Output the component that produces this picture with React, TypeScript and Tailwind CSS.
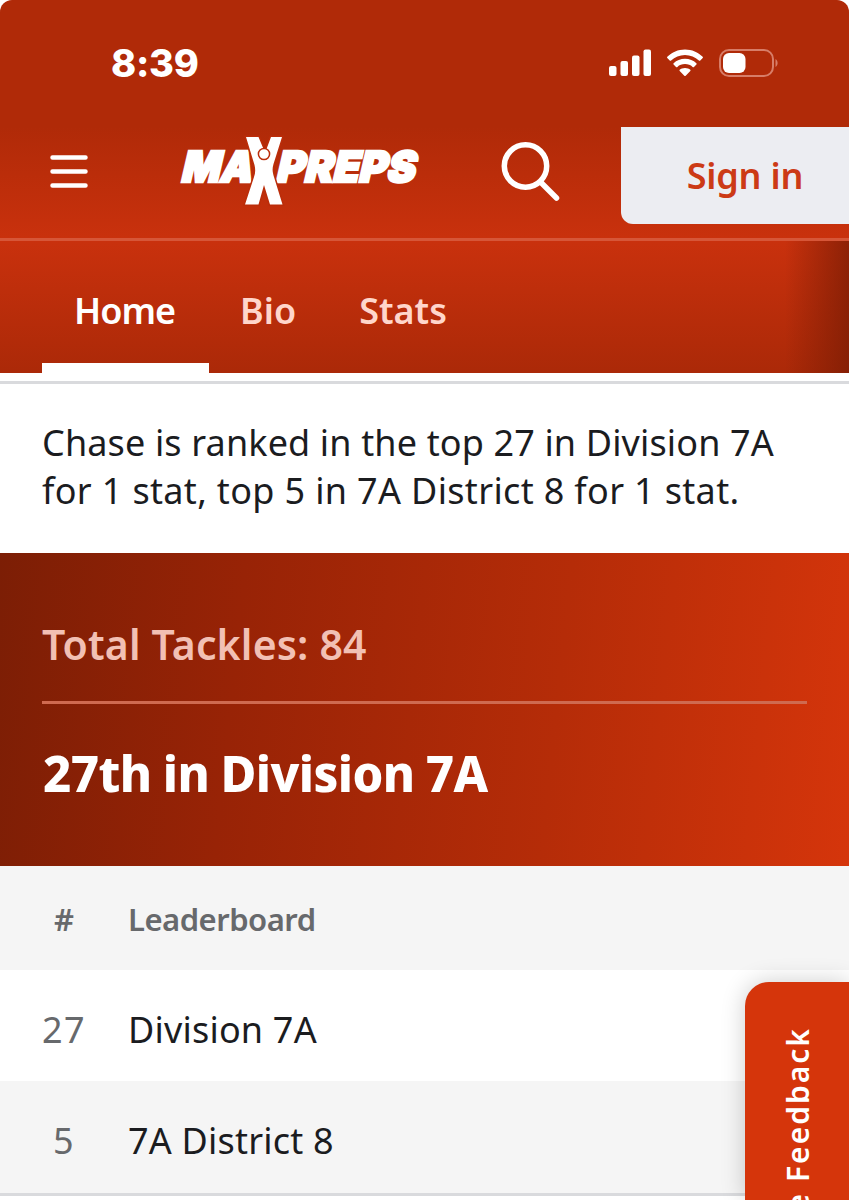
const tabs = ["Home", "Bio", "Stats"];

const rows = [
  { rank: "27", name: "Division 7A" },
  { rank: "5", name: "7A District 8" },
];

function StatusBar() {
  return (
    <div className="flex h-[127px] items-start justify-between bg-[#b02a08] pl-[111px] pr-[70px] pt-[40px] text-white">
      <span className="font-['Inter'] text-[38px] font-extrabold leading-[46px] tracking-[-0.300px]">8:39</span>
      <div className="flex items-center pt-[8px]">
        <svg width="43" height="30" viewBox="0 0 43 30" fill="currentColor">
          <rect x="0" y="18" width="7.500" height="10" rx="2" />
          <rect x="11.500" y="13" width="7.500" height="15" rx="2" />
          <rect x="23" y="7.500" width="7.500" height="20.500" rx="2" />
          <rect x="34.500" y="1.500" width="7.500" height="26.500" rx="2" />
        </svg>
        <svg className="ml-[14px]" width="38" height="30" viewBox="0 0 38 30" fill="currentColor">
          <path d="M19 1.500C26 1.500 32 4.300 36.700 8.700Q37.300 9.400 36.700 10L34.300 12.400Q33.600 13 32.900 12.400C29.200 9 24.400 6.900 19 6.900S8.800 9 5.100 12.400Q4.400 13 3.700 12.400L1.300 10Q.7 9.400 1.300 8.700C6 4.300 12 1.500 19 1.500Z" />
          <path d="M19 10.800C23.500 10.800 27.400 12.500 30.400 15.200Q31 15.900 30.400 16.500L28 18.900Q27.300 19.500 26.600 18.900C24.600 17.100 22 16.100 19 16.100S13.400 17.100 11.400 18.900Q10.700 19.500 10 18.900L7.600 16.500Q7 15.900 7.600 15.200C10.600 12.500 14.500 10.800 19 10.800Z" />
          <path d="M19 20C21.300 20 23 20.700 24.300 21.800Q24.900 22.400 24.300 23L19.700 27.700Q19 28.400 18.300 27.700L13.700 23Q13.100 22.400 13.700 21.800C15 20.700 16.700 20 19 20Z" />
        </svg>
        <svg className="ml-[15px]" width="60" height="30" viewBox="0 0 60 30">
          <rect x="1" y="2" width="53" height="26" rx="9" fill="none" stroke="#d77d68" strokeWidth="2" />
          <rect x="4" y="5" width="22.500" height="20" rx="6" fill="white" />
          <path d="M56.500 11C59.300 12.500 59.300 17.500 56.500 19Z" fill="#d77d68" />
        </svg>
      </div>
    </div>
  );
}

function Logo() {
  return (
    <svg className="overflow-visible" width="244" height="72" viewBox="0 0 244 72" fill="white">
      <g fontFamily="Inter, sans-serif" fontWeight="900" fontSize="42.500" stroke="white" strokeWidth="2.600">
        <text transform="translate(2 47) skewX(-13)" textLength="71" lengthAdjust="spacingAndGlyphs">
          MA
        </text>
        <text transform="translate(97 47) skewX(-13)" textLength="139" lengthAdjust="spacingAndGlyphs">
          PREPS
        </text>
      </g>
      <path
        d="M68 2H80.500L85.500 14H88.500L93 2H104L95.500 29C94 34 94.500 37 96 42L104.500 69.500H92L86 50L80.500 69.500H67L76 42C77.500 38 77.500 34 76.500 30Z"
        stroke="#bb2d0a"
        strokeWidth="3"
        paintOrder="stroke"
      />
      <circle cx="86" cy="19" r="5.600" stroke="#bb2d0a" strokeWidth="1.500" />
    </svg>
  );
}

function Header() {
  return (
    <div className="flex h-[111px] items-start bg-linear-to-b from-[#b02a08] to-[#c9310d]">
      <svg className="ml-[50px] mt-[27px]" width="38" height="34" stroke="white" strokeWidth="4.500" strokeLinecap="round">
        <path d="M2.500 3.500H35.500M2.500 17.500H35.500M2.500 31.500H35.500" />
      </svg>
      <div className="ml-[90px] mt-[8px]">
        <Logo />
      </div>
      <svg className="ml-[78px] mt-[13px]" width="62" height="62" fill="none" stroke="white" strokeWidth="5.500" strokeLinecap="round">
        <circle cx="25.500" cy="26" r="21.200" />
        <path d="M41 42.500L56.500 58" />
      </svg>
      <button className="ml-auto h-[97px] w-[228px] rounded-bl-xl bg-[#ecedf2] pl-[20px] text-[36px] font-semibold leading-[96px] tracking-[-0.200px] text-[#cc3a16]">
        Sign in
      </button>
    </div>
  );
}

function TabBar() {
  return (
    <div className="flex h-[135px] border-t-[3px] border-[#d65638] bg-linear-to-b from-[#c9310d] to-[#ab2908] pl-[42px]">
      {tabs.map((tab, i) => (
        <div
          key={tab}
          className={
            i === 0
              ? "w-[167px] border-b-[10px] border-white pl-[32px] text-[36px] font-semibold leading-[140px] tracking-[-1px] text-white"
              : "pl-[31px] pr-[32px] text-[36px] font-semibold leading-[140px] text-[#ffd6cb]"
          }
        >
          {tab}
        </div>
      ))}
      {/* Fade on the scroll edge */}
      <div className="ml-auto w-[64px] bg-linear-to-r from-[#7a1c04]/0 to-[#7a1c04]/75" />
    </div>
  );
}

export default function App() {
  return (
    <div className="h-[1200px] w-[849px] overflow-hidden bg-white font-['Noto_Sans',sans-serif]">
      <div className="relative h-[1200px]">
        <div className="overflow-hidden rounded-t-[12px]">
          <StatusBar />
          <Header />
          <TabBar />
        </div>

        <div className="mt-[8px] h-[172px] border-t-[3px] border-[#d9dadd] pl-[42px] pt-[35px] text-[36px] leading-[48px] text-[#1b1c1f]">
          <p className="tracking-[0.140px]">Chase is ranked in the top 27 in Division 7A</p>
          <p className="tracking-[0.340px]">for 1 stat, top 5 in 7A District 8 for 1 stat.</p>
        </div>

        {/* Featured stat */}
        <div className="h-[313px] bg-[linear-gradient(96deg,#7c1e05_0%,#982306_28%,#b52c08_65%,#d5350b_100%)] px-[42px] pt-[61px]">
          <div className="h-[90px] border-b-[3px] border-[#cf6a50] text-[41px] font-semibold leading-[60px] tracking-[0.150px] text-[#f2c0b4]">
            Total Tackles: 84
          </div>
          <div className="pl-px pt-[33px] text-[49px] font-extrabold leading-[72px] tracking-[-0.550px] text-white [word-spacing:-1px]">
            27th in Division 7A
          </div>
        </div>

        {/* Leaderboard */}
        <div className="flex h-[104px] items-center bg-[#f5f5f5] pt-[2px] text-[31px] font-semibold text-[#67696c]">
          <span className="w-[128px] text-center">#</span>
          <span className="tracking-[-0.500px]">Leaderboard</span>
        </div>
        <div>
          {rows.map((row) => (
            <div
              key={row.rank}
              className="flex h-[111px] items-center pt-[8px] text-[36px] last:h-[112px] odd:bg-white even:bg-[#f5f5f5]"
            >
              <span className="w-[128px] text-center tracking-[1.500px] text-[#67696c]">{row.rank}</span>
              <span className="tracking-[0.200px] text-[#1b1c1f]">{row.name}</span>
            </div>
          ))}
        </div>
        <div className="h-[3px] bg-[#d9dadd]" />

        {/* Feedback tab */}
        <div className="absolute bottom-0 right-0 flex h-[218px] w-[104px] items-start justify-center rounded-tl-[24px] bg-[#d5350b] pl-[2px] pt-[45px] shadow-[0_0_24px_rgba(0,0,0,0.2)]">
          <span className="rotate-180 whitespace-nowrap text-[30px] font-semibold leading-[44px] tracking-[2px] text-white [writing-mode:vertical-rl]">
            Give Feedback
          </span>
        </div>
      </div>
    </div>
  );
}
